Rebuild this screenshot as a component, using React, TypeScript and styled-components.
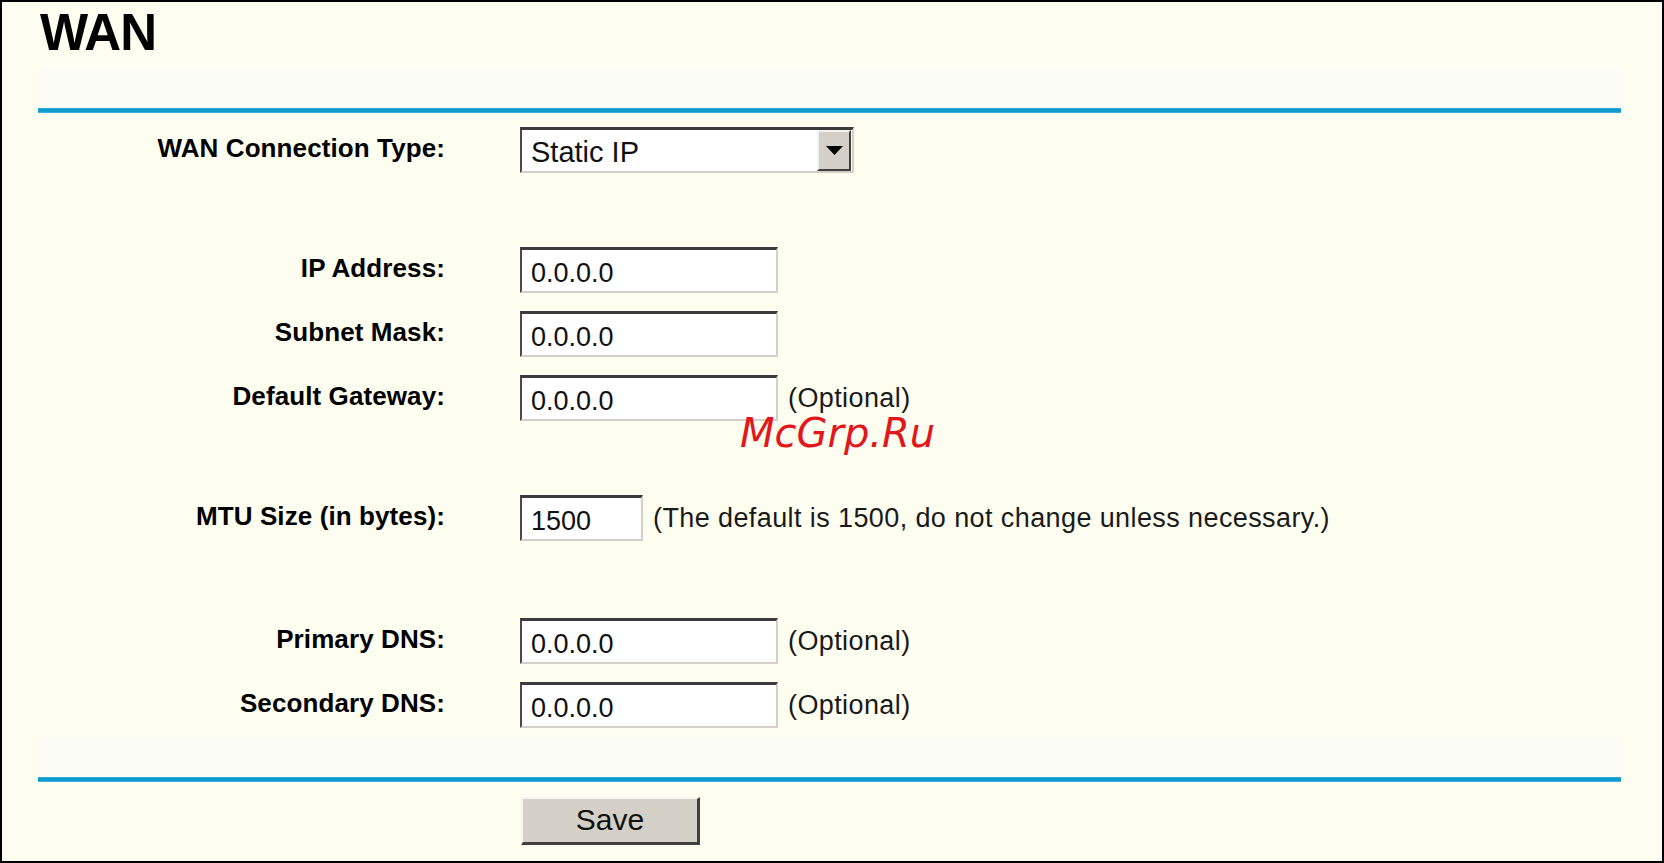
import React from "react";
import styled, {createGlobalStyle} from "styled-components";

const GlobalStyle = createGlobalStyle`
  html, body {
    margin: 0;
    padding: 0;
    background: #fefef0;
  }
  * {
    box-sizing: border-box;
  }
`;

const Frame = styled.div`
  position: relative;
  width: 1664px;
  height: 863px;
  border: 2px solid #000;
  background: #fefef0;
  font-family: "Liberation Sans", Arial, sans-serif;
  color: #000;
  overflow: hidden;
`;

const Title = styled.h1`
  margin: 0;
  padding: 6px 0 0 38px;
  height: 66px;
  font-size: 51px;
  line-height: 50px;
  font-weight: bold;
  letter-spacing: -1px;
`;

const Panel = styled.div`
  margin: 0 41px 0 36px;
  display: flex;
  flex-direction: column;
`;

const Band = styled.div`
  height: 40px;
  background: #fbfcf5;
`;

const Rule = styled.div`
  height: 5px;
  background: linear-gradient(#4fb6e0 0, #0e9bd0 1px, #0e9bd0 4px, #6cc4e6 5px);
`;

const FormRow = styled.div<{ $top?: number }>`
  display: grid;
  grid-template-columns: 407px 1fr;
  column-gap: 75px;
  align-items: center;
  height: 64px;
  margin-top: ${p => p.$top ?? 0}px;
`;

const Label = styled.div`
  text-align: right;
  font-size: 26px;
  font-weight: bold;
  letter-spacing: 0.1px;
  white-space: nowrap;
  padding-bottom: 4px;
`;

const Control = styled.div`
  display: flex;
  align-items: center;
  gap: 10px;
`;

const TextBox = styled.input<{ $width?: number }>`
  width: ${p => p.$width ?? 258}px;
  height: 46px;
  margin: 0;
  padding: 5px 0 0 9px;
  border-style: solid;
  border-width: 3px 2px 2px 2px;
  border-color: #3c3c3c #d4d0c8 #d4d0c8 #4a4a4a;
  background: #fff;
  font-family: "Liberation Sans", Arial, sans-serif;
  font-size: 27px;
  color: #111;
  outline: none;
`;

const Hint = styled.span`
  font-size: 27px;
  letter-spacing: 0.4px;
  color: #1a1a1a;
  white-space: nowrap;
`;

const SelectBox = styled.div`
  display: flex;
  align-items: stretch;
  width: 334px;
  height: 46px;
  border-style: solid;
  border-width: 3px 2px 2px 2px;
  border-color: #3c3c3c #d4d0c8 #d4d0c8 #4a4a4a;
  background: #fff;
`;

const SelectValue = styled.div`
  flex: 1;
  display: flex;
  align-items: center;
  padding: 4px 0 0 9px;
  font-size: 29px;
  color: #111;
`;

const ArrowButton = styled.div`
  width: 34px;
  margin: 0 1px 0 0;
  display: flex;
  align-items: center;
  justify-content: center;
  background: #d4d0c8;
  border-style: solid;
  border-width: 2px;
  border-color: #f4f2ee #404040 #404040 #f4f2ee;
`;

const ButtonRow = styled.div`
  padding: 15px 0 0 483px;
`;

const Button = styled.button`
  width: 179px;
  height: 48px;
  margin: 0;
  padding: 0 0 2px 0;
  background: #d4d0c8;
  border-style: solid;
  border-width: 2px 3px 3px 2px;
  border-color: #f6f5f2 #404040 #404040 #f6f5f2;
  font-family: "Liberation Sans", Arial, sans-serif;
  font-size: 30px;
  color: #111;
`;

const Watermark = styled.div`
  position: absolute;
  left: 738px;
  top: 411px;
  font-family: "DejaVu Sans", sans-serif;
  font-style: italic;
  font-size: 40px;
  line-height: 40px;
  color: #e3161c;
  pointer-events: none;
`;

const Spacer = styled.div<{ $h: number }>`
  height: ${p => p.$h}px;
`;

type Field = { label: string; value: string; hint?: string; width?: number };

const addressFields: Field[] = [
    {label: "IP Address:", value: "0.0.0.0"},
    {label: "Subnet Mask:", value: "0.0.0.0"},
    {label: "Default Gateway:", value: "0.0.0.0", hint: "(Optional)"},
];

const dnsFields: Field[] = [
    {label: "Primary DNS:", value: "0.0.0.0", hint: "(Optional)"},
    {label: "Secondary DNS:", value: "0.0.0.0", hint: "(Optional)"},
];

const renderField = (field: Field) => (
    <FormRow key={field.label}>
        <Label>{field.label}</Label>
        <Control>
            <TextBox defaultValue={field.value} $width={field.width}/>
            {field.hint && <Hint>{field.hint}</Hint>}
        </Control>
    </FormRow>
);

const App: React.FC = () => {
    return (
        <Frame>
            <GlobalStyle/>
            <Title>WAN</Title>
            <Panel>
                <Band/>
                <Rule/>
                <FormRow $top={5}>
                    <Label>WAN Connection Type:</Label>
                    <Control>
                        <SelectBox>
                            <SelectValue>Static IP</SelectValue>
                            <ArrowButton>
                                <svg width="17" height="9" viewBox="0 0 17 9">
                                    <polygon points="0,0 17,0 8.5,9" fill="#000"/>
                                </svg>
                            </ArrowButton>
                        </SelectBox>
                    </Control>
                </FormRow>
                <Spacer $h={56}/>
                {addressFields.map(renderField)}
                <Spacer $h={56}/>
                {renderField({
                    label: "MTU Size (in bytes):",
                    value: "1500",
                    width: 123,
                    hint: "(The default is 1500, do not change unless necessary.)"
                })}
                <Spacer $h={59}/>
                {dnsFields.map(renderField)}
                <Band/>
                <Rule/>
                <ButtonRow>
                    <Button>Save</Button>
                </ButtonRow>
            </Panel>
            <Watermark>McGrp.Ru</Watermark>
        </Frame>
    );
};

export default App;
